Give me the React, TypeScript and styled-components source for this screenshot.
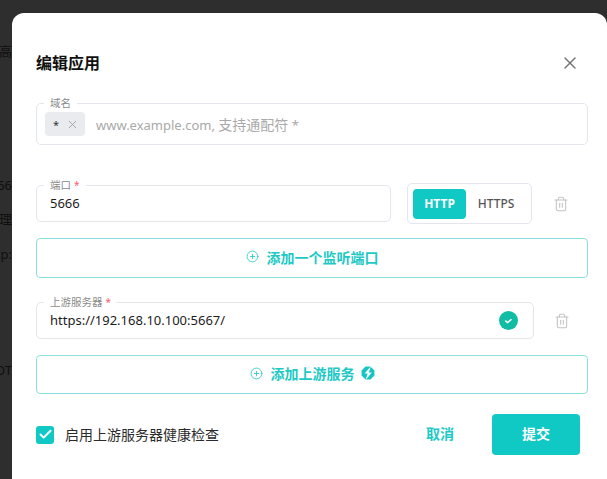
import React from "react";
import styled, { createGlobalStyle } from "styled-components";
import { CirclePlus, Trash2, X, Check } from "lucide-react";

const Global = createGlobalStyle`
  html, body { margin: 0; padding: 0; height: 100%; overflow: hidden; background: #2e2e2e; }
  * { box-sizing: border-box; }
  body { font-family: "Noto Sans", "Noto Sans CJK SC", sans-serif; }
`;

const Page = styled.div`
  position: relative;
  width: 607px;
  height: 479px;
  overflow: hidden;
  background: #2e2e2e;
`;

const Backdrop = styled.div`
  display: flex;
  flex-direction: column;
  padding-top: 42px;
  font-size: 13px;
  line-height: 18px;
  color: #0e0e0e;
`;

const BackLine = styled.div<{ $top: number }>`
  margin-top: ${(p) => p.$top}px;
  width: 12px;
  overflow: hidden;
  white-space: nowrap;
  display: flex;
  justify-content: flex-end;
`;

const Modal = styled.div`
  position: absolute;
  left: 12px;
  top: 13px;
  width: 595px;
  height: 480px;
  background: #fff;
  border-radius: 12px;
  padding: 36px 19px 0 24px;
  color: #111;
`;

const Header = styled.div`
  display: flex;
  align-items: center;
  justify-content: space-between;
  height: 28px;
  padding-right: 8px;
`;

const Title = styled.h2`
  margin: 0;
  font-size: 16px;
  line-height: 28px;
  font-weight: 700;
  color: #111;
`;

const CloseButton = styled.span`
  display: flex;
  color: #737373;
`;

const Row = styled.div<{ $top: number }>`
  display: flex;
  align-items: center;
  margin-top: ${(p) => p.$top}px;
`;

const Field = styled.div<{ $width: number; $height: number }>`
  position: relative;
  display: flex;
  align-items: center;
  width: ${(p) => p.$width}px;
  height: ${(p) => p.$height}px;
  border: 1px solid #e3e6ee;
  border-radius: 5px;
  padding: 0 13px;
  font-size: 13px;
  color: #1c1c1c;
`;

const FieldLabel = styled.label`
  position: absolute;
  left: 7px;
  top: -9px;
  padding: 0 6px;
  background: #fff;
  font-size: 10.5px;
  line-height: 16px;
  color: #8a8a8a;
`;

const Required = styled.span`
  color: #f5616a;
  margin-left: 3px;
  font-size: 10px;
`;

const Tag = styled.span`
  display: inline-flex;
  align-items: center;
  justify-content: center;
  gap: 7px;
  width: 40px;
  height: 24px;
  margin-left: -5px;
  padding-left: 2px;
  border-radius: 4px;
  background: #e9ebef;
  font-size: 11px;
  color: #333;
`;

const TagClose = styled.span`
  display: flex;
  color: #9a9a9a;
`;

const Placeholder = styled.span`
  margin-left: 11px;
  font-size: 13px;
  color: #a9a9a9;
`;

const PlaceholderCjk = styled.span`
  font-size: 14px;
`;

const Value = styled.span`
  flex: 1;
  padding-bottom: 2px;
`;

const Segmented = styled.div`
  display: flex;
  align-items: center;
  width: 125px;
  height: 41px;
  margin-left: 16px;
  padding: 0 5px;
  border: 1px solid #e3e6ee;
  border-radius: 5px;
`;

const Segment = styled.span<{ $active?: boolean }>`
  display: flex;
  align-items: center;
  justify-content: center;
  width: ${(p) => (p.$active ? 53 : 60)}px;
  height: 30px;
  border-radius: 4px;
  font-size: 12px;
  font-weight: ${(p) => (p.$active ? 700 : 500)};
  color: ${(p) => (p.$active ? "#fff" : "#555")};
  background: ${(p) => (p.$active ? "#10c8c4" : "transparent")};
`;

const TrashButton = styled.span<{ $left: number }>`
  display: flex;
  margin-left: ${(p) => p.$left}px;
  color: #c4c4c4;
`;

const AddButton = styled.button<{ $height: number; $top: number }>`
  display: flex;
  align-items: center;
  justify-content: center;
  gap: 8px;
  width: 552px;
  height: ${(p) => p.$height}px;
  margin-top: ${(p) => p.$top}px;
  padding: 0 0 3px;
  border: 1px solid #8be0dd;
  border-radius: 4px;
  background: #fff;
  font-family: inherit;
  font-size: 14px;
  font-weight: 700;
  color: #1ec9c5;
`;

const BadgeSvg = styled.svg`
  margin-left: -2px;
`;

const StatusSvg = styled.svg`
  margin-right: 2px;
`;

const Footer = styled.div`
  display: flex;
  align-items: center;
  margin-top: 20px;
  height: 41px;
  padding-right: 8px;
`;

const CheckBox = styled.span`
  display: flex;
  align-items: center;
  justify-content: center;
  width: 18px;
  height: 18px;
  border-radius: 3px;
  background: #10c8c4;
  color: #fff;
`;

const CheckText = styled.span`
  margin-left: 11px;
  padding-bottom: 2px;
  font-size: 14px;
  color: #2b2b2b;
  flex: 1;
`;

const CancelButton = styled.span`
  width: 28px;
  padding-bottom: 3px;
  font-size: 14px;
  font-weight: 700;
  white-space: nowrap;
  color: #1ec9c5;
`;

const SubmitButton = styled.span`
  display: flex;
  align-items: center;
  justify-content: center;
  width: 88px;
  height: 41px;
  margin-left: 38px;
  padding-bottom: 3px;
  border-radius: 4px;
  background: #10c8c4;
  font-size: 14px;
  font-weight: 700;
  color: #fff;
`;

const StatusIcon = () => (
  <StatusSvg width="19" height="19" viewBox="0 0 19 19">
    <circle cx="9.5" cy="9.5" r="9.5" fill="#10bda4" />
    <path d="M6.3 9.6l2.2 2 4-3.4" fill="none" stroke="#fff" strokeWidth="1.5" />
  </StatusSvg>
);

const BadgeIcon = () => (
  <BadgeSvg width="14" height="14" viewBox="0 0 14 14">
    <path d="M4.5.6h5L13.4 4.5v5L9.5 13.4h-5L.6 9.5v-5z" fill="#14c6c2" />
    <path d="M10 0 3.6 7.6h3L4.6 14l6.2-7.6h-3z" fill="#fff" />
  </BadgeSvg>
);

export default function App() {
  return (
    <Page>
      <Global />
      <Backdrop>
        <BackLine $top={0}>高</BackLine>
        <BackLine $top={116}>66</BackLine>
        <BackLine $top={16}>理</BackLine>
        <BackLine $top={17}>tp:</BackLine>
        <BackLine $top={98}>OT</BackLine>
      </Backdrop>
      <Modal>
        <Header>
          <Title>编辑应用</Title>
          <CloseButton>
            <X size={20} strokeWidth={1.7} />
          </CloseButton>
        </Header>
        <Row $top={26}>
          <Field $width={552} $height={42}>
            <FieldLabel>域名</FieldLabel>
            <Tag>
              *
              <TagClose>
                <X size={13} strokeWidth={1.5} />
              </TagClose>
            </Tag>
            <Placeholder>
              www.example.com, <PlaceholderCjk>支持通配符</PlaceholderCjk> *
            </Placeholder>
          </Field>
        </Row>
        <Row $top={38}>
          <Field $width={355} $height={37}>
            <FieldLabel>
              端口<Required>*</Required>
            </FieldLabel>
            <Value>5666</Value>
          </Field>
          <Segmented>
            <Segment $active>HTTP</Segment>
            <Segment>HTTPS</Segment>
          </Segmented>
          <TrashButton $left={21}>
            <Trash2 size={16} strokeWidth={1.6} />
          </TrashButton>
        </Row>
        <AddButton $height={40} $top={14}>
          <CirclePlus size={13} strokeWidth={1.5} />
          添加一个监听端口
        </AddButton>
        <Row $top={24}>
          <Field $width={498} $height={37}>
            <FieldLabel>
              上游服务器<Required>*</Required>
            </FieldLabel>
            <Value>https://192.168.10.100:5667/</Value>
            <StatusIcon />
          </Field>
          <TrashButton $left={20}>
            <Trash2 size={16} strokeWidth={1.6} />
          </TrashButton>
        </Row>
        <AddButton $height={39} $top={16}>
          <CirclePlus size={13} strokeWidth={1.5} />
          添加上游服务
          <BadgeIcon />
        </AddButton>
        <Footer>
          <CheckBox>
            <Check size={15} strokeWidth={3.2} />
          </CheckBox>
          <CheckText>启用上游服务器健康检查</CheckText>
          <CancelButton>取消</CancelButton>
          <SubmitButton>提交</SubmitButton>
        </Footer>
      </Modal>
    </Page>
  );
}
